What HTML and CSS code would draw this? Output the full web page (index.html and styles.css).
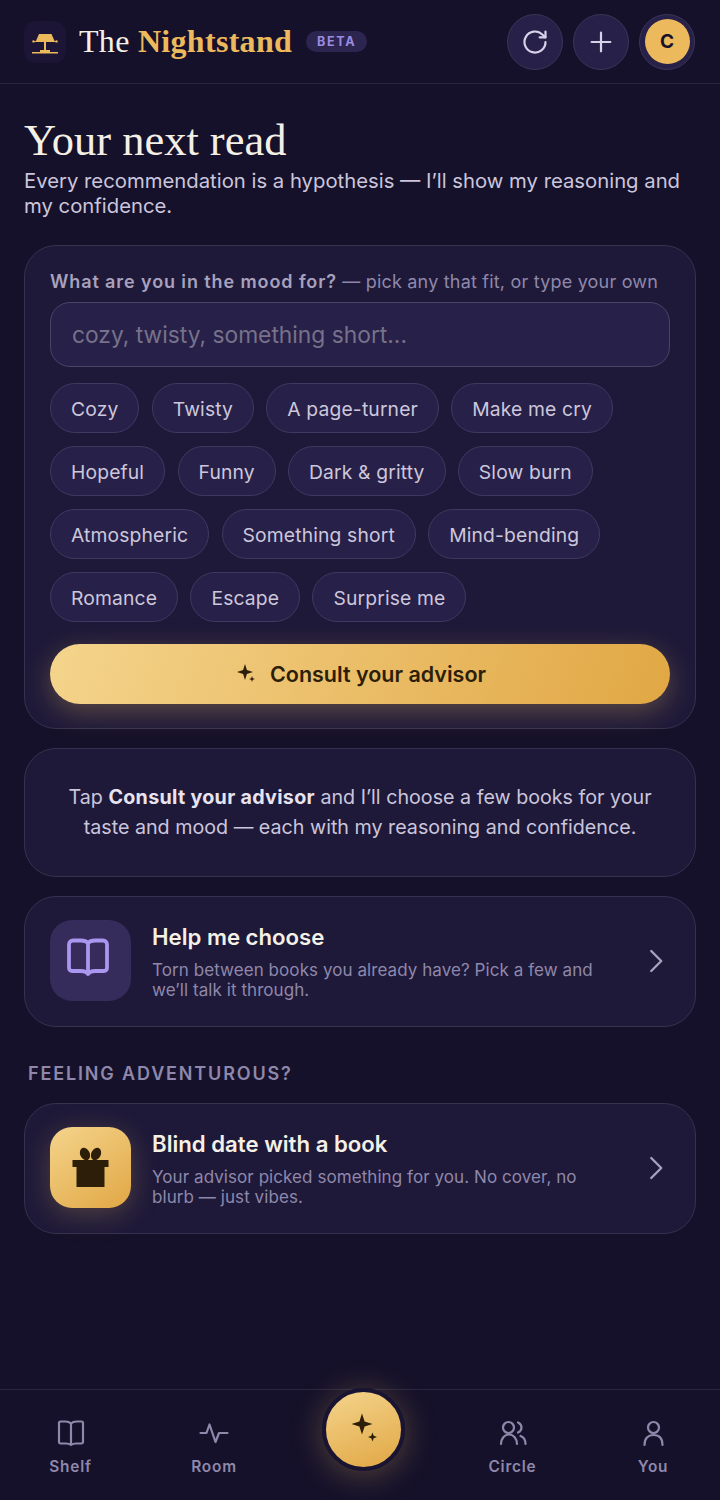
FILE: index.html
```html
<!DOCTYPE html>
<html lang="en">
<head>
    <meta charset="UTF-8">
    <meta name="viewport" content="width=device-width, initial-scale=1.0">
    <title>The Nightstand</title>
    <link rel="stylesheet" href="styles.css">
</head>
<body>

    <header class="topbar">
        <div class="logo">
            <svg viewBox="0 0 42 42" width="42" height="42" fill="#ecb95c">
                <path d="M15 13h12.500l3.500 8H11.500z"/>
                <rect x="9" y="20" width="24" height="0.800"/>
                <rect x="20" y="21" width="2" height="10"/>
                <rect x="16" y="29" width="10" height="2"/>
                <rect x="8" y="31" width="26" height="1.500"/>
                <circle cx="9.500" cy="20.400" r="1.200"/>
                <circle cx="32.500" cy="20.400" r="1.200"/>
            </svg>
        </div>
        <div class="brand">The <span class="brand-gold">Nightstand</span></div>
        <span class="beta">BETA</span>
        <div class="top-actions">
            <button class="round-btn">
                <svg viewBox="0 0 24 24" width="28" height="28" fill="none" stroke="#d8d2e8" stroke-width="1.900" stroke-linecap="round" stroke-linejoin="round">
                    <path d="M21 12a9 9 0 1 1-2.700-6.400L21 8"/>
                    <path d="M21 3v5h-5"/>
                </svg>
            </button>
            <button class="round-btn">
                <svg viewBox="0 0 24 24" width="28" height="28" fill="none" stroke="#d8d2e8" stroke-width="1.900" stroke-linecap="round">
                    <path d="M12 4v16M4 12h16"/>
                </svg>
            </button>
            <button class="round-btn avatar-btn"><span class="avatar">C</span></button>
        </div>
    </header>

    <main class="page">
        <h1>Your next read</h1>
        <p class="intro">Every recommendation is a hypothesis — I’ll show my reasoning and my confidence.</p>

        <section class="card mood">
            <p class="mood-label"><b>What are you in the mood for?</b> — pick any that fit, or type your own</p>
            <input class="mood-input" type="text" placeholder="cozy, twisty, something short...">
            <div class="chips">
                <span class="chip">Cozy</span>
                <span class="chip">Twisty</span>
                <span class="chip">A page-turner</span>
                <span class="chip">Make me cry</span>
                <span class="chip">Hopeful</span>
                <span class="chip">Funny</span>
                <span class="chip">Dark &amp; gritty</span>
                <span class="chip">Slow burn</span>
                <span class="chip">Atmospheric</span>
                <span class="chip">Something short</span>
                <span class="chip">Mind-bending</span>
                <span class="chip">Romance</span>
                <span class="chip">Escape</span>
                <span class="chip">Surprise me</span>
            </div>
            <button class="consult">
                <svg viewBox="0 0 24 24" width="24" height="24" fill="#2c1e08">
                    <path d="M11 2l1.900 6.100 6.100 1.900-6.100 1.900-1.900 6.100-1.900-6.100-6.100-1.900 6.100-1.900z"/>
                    <path d="M18 14l.8 2.200 2.200.8-2.200.8-.8 2.200-.8-2.200-2.200-.8 2.200-.8z"/>
                </svg>
                Consult your advisor
            </button>
        </section>

        <section class="card hint">
            Tap <b>Consult your advisor</b> and I’ll choose a few books for your taste and mood — each with my reasoning and confidence.
        </section>

        <section class="card row-card">
            <div class="row-icon row-icon-book">
                <svg class="book-svg" viewBox="0 0 44 44" width="44" height="44" fill="none" stroke="#a996ee" stroke-width="3.800" stroke-linecap="round" stroke-linejoin="round">
                    <path d="M22 7c-1.500-1.700-4-2.500-7-2.500H7A4 4 0 0 0 3 8.500V32a3 3 0 0 0 3 3h9c3 0 5.500.8 7 3 1.500-2.200 4-3 7-3h9a3 3 0 0 0 3-3V8.500a4 4 0 0 0-4-4h-8c-3 0-5.500.8-7 2.500zM22 7v31"/>
                </svg>
            </div>
            <div class="row-text">
                <div class="row-title">Help me choose</div>
                <div class="row-desc">Torn between books you already have? Pick a few and we’ll talk it through.</div>
            </div>
            <svg class="chevron" viewBox="0 0 24 24" width="30" height="30" fill="none" stroke="#a8a1bd" stroke-width="1.900" stroke-linecap="round" stroke-linejoin="round">
                <path d="M9 4l8 8-8 8"/>
            </svg>
        </section>

        <h2 class="section-label">FEELING ADVENTUROUS?</h2>

        <section class="card row-card">
            <div class="row-icon row-icon-gift">
                <svg viewBox="0 0 44 44" width="44" height="44" fill="#2c1e08">
                    <ellipse cx="16" cy="8" rx="4.800" ry="6.500" transform="rotate(-25 16 8)"/>
                    <ellipse cx="27" cy="8" rx="4.800" ry="6.500" transform="rotate(25 27 8)"/>
                    <rect x="3.500" y="14" width="36" height="7"/>
                    <rect x="7.500" y="21" width="28" height="20"/>
                </svg>
            </div>
            <div class="row-text">
                <div class="row-title">Blind date with a book</div>
                <div class="row-desc">Your advisor picked something for you. No cover, no blurb — just vibes.</div>
            </div>
            <svg class="chevron" viewBox="0 0 24 24" width="30" height="30" fill="none" stroke="#a8a1bd" stroke-width="1.900" stroke-linecap="round" stroke-linejoin="round">
                <path d="M9 4l8 8-8 8"/>
            </svg>
        </section>
    </main>

    <nav class="tabbar">
        <a class="tab">
            <svg viewBox="0 0 30 30" width="30" height="30" fill="none" stroke="#8f88aa" stroke-width="2.200" stroke-linecap="round" stroke-linejoin="round">
                <path d="M15 6.500c-1.300-1.300-3.200-2-5.500-2H4.500A1.500 1.500 0 0 0 3 6v19a1.500 1.500 0 0 0 1.500 1.500H10c2 0 3.700.5 5 1.500 1.300-1 3-1.500 5-1.500h5.500A1.500 1.500 0 0 0 27 25V6a1.500 1.500 0 0 0-1.500-1.500h-5c-2.300 0-4.200.7-5.500 2zM15 6.500V28"/>
            </svg>
            Shelf
        </a>
        <a class="tab">
            <svg viewBox="0 0 30 30" width="30" height="30" fill="none" stroke="#8f88aa" stroke-width="2.200" stroke-linecap="round" stroke-linejoin="round">
                <path d="M1.500 16h6l3-8.500 6 17.500 3.500-9h8.500"/>
            </svg>
            Room
        </a>
        <div class="fab-slot">
            <button class="fab">
                <svg viewBox="0 0 36 36" width="36" height="36" fill="#2c1e08">
                    <path d="M17 1.500l2.600 7.900 7.900 2.600-7.900 2.600-2.600 7.900-2.600-7.900-7.900-2.600 7.900-2.600z"/>
                    <path d="M27.500 20.500l1.200 3.300 3.300 1.200-3.300 1.200-1.200 3.300-1.200-3.300-3.300-1.200 3.300-1.200z"/>
                </svg>
            </button>
        </div>
        <a class="tab">
            <svg viewBox="0 0 30 30" width="30" height="30" fill="none" stroke="#8f88aa" stroke-width="2.200" stroke-linecap="round" stroke-linejoin="round">
                <circle cx="10.500" cy="10.500" r="5.500"/>
                <path d="M3 27c0-5.500 3.500-9.500 8-9.500s8 4 8 9.500"/>
                <path d="M20 5.500c2.200 1 3.500 2.800 3.500 5s-1.300 4-3.500 5M22.500 19c2.800 1 5 3.500 5 8"/>
            </svg>
            Circle
        </a>
        <a class="tab">
            <svg viewBox="0 0 30 30" width="30" height="30" fill="none" stroke="#8f88aa" stroke-width="2.200" stroke-linecap="round" stroke-linejoin="round">
                <circle cx="15.500" cy="10.500" r="5.500"/>
                <path d="M6.500 28c0-6.500 3.500-10 9-10s9 3.500 9 10"/>
            </svg>
            You
        </a>
    </nav>

</body>
</html>
```

FILE: styles.css
```css
* {
    box-sizing: border-box;
}

body {
    margin: 0;
    height: 1500px;
    display: flex;
    flex-direction: column;
    background-color: #15112a;
    color: #f5f0e6;
    font-family: Inter, "Noto Sans", sans-serif;
}

.topbar {
    height: 84px;
    flex-shrink: 0;
    display: flex;
    align-items: center;
    padding: 0 25px 0 24px;
    border-bottom: 1px solid #2a2640;
}

.logo {
    width: 42px;
    height: 42px;
    border-radius: 12px;
    background-color: #1c1536;
    margin-right: 13px;
}

.brand {
    font-family: "Liberation Serif", serif;
    font-size: 32px;
    letter-spacing: 0.300px;
    margin-right: 14px;
}

.brand-gold {
    color: #ecb95c;
    font-weight: bold;
}

.beta {
    padding: 3px 11px;
    border-radius: 12px;
    background-color: #2c2550;
    color: #9c8be0;
    font-size: 12.500px;
    font-weight: 700;
    letter-spacing: 1.700px;
}

.top-actions {
    margin-left: auto;
    display: flex;
    gap: 10px;
}

.round-btn {
    width: 56px;
    height: 56px;
    padding: 0;
    border-radius: 50%;
    border: 1px solid #3b3556;
    background-color: #272048;
    display: flex;
    align-items: center;
    justify-content: center;
}

.avatar {
    width: 45px;
    height: 45px;
    border-radius: 50%;
    background-color: #ecb95c;
    color: #15112a;
    font-family: Inter, sans-serif;
    font-size: 19px;
    font-weight: 700;
    display: flex;
    align-items: center;
    justify-content: center;
}

.page {
    padding: 0 24px;
}

h1 {
    margin: 31px 0 0;
    font-family: "Liberation Serif", serif;
    font-weight: 400;
    font-size: 44.500px;
    line-height: 50px;
}

.intro {
    margin: 3px 0 0;
    font-size: 20.300px;
    line-height: 25px;
    color: #cbc5dc;
}

.card {
    border: 1px solid #37314f;
    border-radius: 32px;
    background-color: #1e1939;
}

.mood {
    margin-top: 27px;
    padding: 25px 25px 24px;
}

.mood-label {
    margin: 0;
    font-size: 18px;
    line-height: 22px;
    color: #8f88aa;
    letter-spacing: 0.200px;
}

.mood-label b {
    font-weight: 600;
    color: #a8a1bd;
    letter-spacing: 0.900px;
}

.mood-input {
    display: block;
    width: 100%;
    height: 65px;
    margin-top: 9px;
    padding: 0 21px;
    border: 1px solid #4a4468;
    border-radius: 20px;
    background-color: #272048;
    font-family: Inter, sans-serif;
    font-size: 22.800px;
}

.mood-input::placeholder {
    color: #77718a;
}

.chips {
    display: flex;
    flex-wrap: wrap;
    gap: 13px 12.300px;
    margin-top: 16px;
    padding-right: 30px;
}

.chip {
    height: 50px;
    padding: 1px 20px 0;
    border: 1px solid #3f3860;
    border-radius: 25px;
    background-color: #272048;
    color: #cdc7dc;
    font-size: 19.300px;
    letter-spacing: 0.150px;
    display: flex;
    align-items: center;
}

.consult {
    width: 100%;
    height: 60px;
    margin-top: 22px;
    border: 0;
    border-radius: 30px;
    background: linear-gradient(110deg, #f4d48c, #e1a744);
    box-shadow: 0 8px 28px rgba(236, 185, 92, 0.3);
    color: #2c1e08;
    font-family: Inter, sans-serif;
    font-size: 21.500px;
    font-weight: 600;
    display: flex;
    align-items: center;
    justify-content: center;
    gap: 12px;
}

.hint {
    margin-top: 19px;
    padding: 33px 40px;
    height: 129px;
    font-size: 19.700px;
    line-height: 30px;
    text-align: center;
    color: #cbc5dc;
}

.hint b {
    font-weight: 700;
    letter-spacing: 0.300px;
    color: #e8e3f0;
}

.row-card {
    height: 131px;
    margin-top: 19px;
    padding: 0 25px 2px;
    display: flex;
    align-items: center;
}

.row-icon {
    width: 81px;
    height: 81px;
    flex-shrink: 0;
    border-radius: 22px;
    display: flex;
    align-items: center;
    justify-content: center;
}

.row-icon-book {
    background-color: #352c5c;
}

.book-svg {
    margin: 0 5px 5px 0;
}

.row-icon-gift {
    background: linear-gradient(145deg, #f4d48c, #e1a744);
    box-shadow: 0 6px 28px rgba(236, 185, 92, 0.25);
}

.row-text {
    flex: 1;
    margin: 2px 0 0 21px;
}

.row-title {
    font-size: 22.200px;
    font-weight: 600;
    line-height: 28px;
    color: #f5f0e6;
}

.row-desc {
    margin-top: 9px;
    font-size: 17px;
    line-height: 20px;
    letter-spacing: 0.070px;
    color: #8f88aa;
}

.chevron {
    flex-shrink: 0;
    margin: 0 0 0 32px;
}

.section-label {
    margin: 35px 0 0 4px;
    font-size: 18px;
    line-height: 24px;
    font-weight: 600;
    letter-spacing: 1.850px;
    color: #8f88aa;
}

.section-label + .card {
    margin-top: 17px;
}

.tabbar {
    margin-top: auto;
    height: 111px;
    padding-top: 27px;
    border-top: 1px solid #2a2640;
    display: grid;
    grid-template-columns: 141px 146px 152px 147px 134px;
    align-items: start;
}

.tab {
    display: flex;
    flex-direction: column;
    align-items: center;
    gap: 10px;
    font-size: 15.400px;
    line-height: 19px;
    font-weight: 600;
    letter-spacing: 0.800px;
    color: #8f88aa;
}

.fab-slot {
    display: flex;
    justify-content: center;
}

.fab {
    width: 83px;
    height: 83px;
    flex-shrink: 0;
    margin-top: -29px;
    padding: 0;
    border: 4px solid #1a1433;
    border-radius: 50%;
    background: linear-gradient(160deg, #f4d48c, #e1a744);
    box-shadow: 0 4px 32px rgba(236, 185, 92, 0.3);
    display: flex;
    align-items: center;
    justify-content: center;
}
```
